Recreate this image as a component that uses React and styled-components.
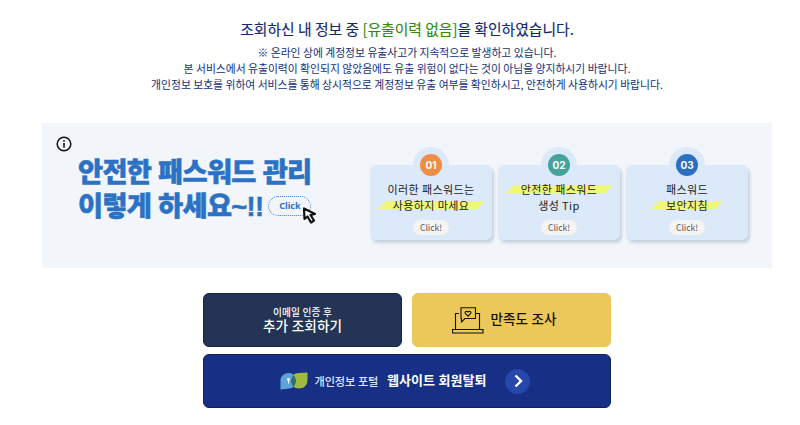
import React from 'react';
import styled, { createGlobalStyle } from 'styled-components';

const Global = createGlobalStyle`
  html, body { margin: 0; padding: 0; background: #fff; }
  body { font-family: "Noto Sans CJK KR", "Noto Sans", sans-serif; }
  * { box-sizing: border-box; }
`;

const Page = styled.div`
  width: 800px;
  height: 425px;
  overflow: hidden;
  padding: 19px 0 0 14px;
  display: flex;
  flex-direction: column;
  align-items: center;
`;

const Title = styled.h2`
  margin: 0;
  font-size: 14.8px;
  line-height: 20px;
  font-weight: 400;
  color: #0f2a6e;
  -webkit-text-stroke: 0.15px #0f2a6e;
  text-align: center;
  white-space: nowrap;
  span { color: #2f8a12; -webkit-text-stroke: 0.15px #2f8a12; }
`;

const Notice = styled.p`
  margin: 5px 0 0;
  font-size: 10.8px;
  line-height: 16px;
  color: #12307a;
  text-align: center;
  white-space: nowrap;
`;

const Banner = styled.section`
  position: relative;
  margin-top: 31px;
  width: 730px;
  height: 145px;
  background: #f2f6fb;
  display: flex;
`;

const InfoIcon = styled.svg`
  position: absolute;
  left: 14px;
  top: 13px;
`;

const Lead = styled.div`
  width: 328px;
  padding: 33px 0 0 36px;
`;

const Headline = styled.h3`
  margin: 0;
  font-family: "Liberation Sans", "Noto Sans CJK KR", sans-serif;
  font-size: 27.3px;
  line-height: 34px;
  font-weight: 900;
  color: #2c72c4;
  -webkit-text-stroke: 0.5px #2c72c4;
  letter-spacing: -0.7px;
  white-space: nowrap;
  display: flex;
  flex-direction: column;
`;

const HeadRow = styled.span`
  display: flex;
  align-items: center;
`;

const ClickTag = styled.span`
  position: relative;
  margin-left: 5px;
  margin-top: -2px;
  width: 43px;
  height: 20px;
  border: 1.4px dotted #3b78c8;
  border-radius: 10px;
  font-family: "Noto Sans", sans-serif;
  font-size: 9px;
  line-height: 17px;
  font-weight: 700;
  letter-spacing: 0;
  text-align: center;
  color: #2c72c4;
  -webkit-text-stroke: 0;
`;

const Cursor = styled.svg`
  position: absolute;
  right: -8px;
  top: 10px;
`;

const Cards = styled.div`
  display: flex;
  gap: 6px;
  padding-top: 24px;
`;

const Card = styled.div`
  position: relative;
  width: 122px;
  height: 75px;
  margin-top: 18px;
  background: #dce9f9;
  border-radius: 6px;
  box-shadow: 2px 3px 3px rgba(120, 140, 170, 0.35);
  display: flex;
  flex-direction: column;
  align-items: center;
  padding-top: 16px;
`;

const Tab = styled.div`
  position: absolute;
  top: -18px;
  left: 43px;
  width: 36px;
  height: 36px;
  border-radius: 50%;
  background: #dce9f9;
  display: flex;
  align-items: center;
  justify-content: center;
`;

const Badge = styled.span`
  width: 22px;
  height: 22px;
  border-radius: 50%;
  background: ${(p) => p.$color};
  color: #fff;
  font-family: Inter, sans-serif;
  font-size: 10px;
  font-weight: 700;
  line-height: 22px;
  text-align: center;
`;

const CardLine = styled.span`
  position: relative;
  height: 16px;
  font-size: 11px;
  line-height: 16px;
  color: #222;
  white-space: nowrap;
  letter-spacing: 0.4px;
  z-index: 0;
  ${(p) => p.$marked && `
    &::before {
      content: '';
      position: absolute;
      z-index: -1;
      left: -11px;
      right: -11px;
      top: 4px;
      height: 8px;
      background: #eff77a;
      transform: skewX(-45deg);
    }
  `}
`;

const ClickPill = styled.span`
  position: absolute;
  bottom: 5px;
  left: 43px;
  width: 36px;
  height: 15px;
  border-radius: 8px;
  background: #f4f4f4;
  color: #555;
  font-size: 8.5px;
  line-height: 15px;
  text-align: center;
`;

const Actions = styled.div`
  margin-top: 25px;
  width: 408px;
  display: grid;
  grid-template-columns: 199px 199px;
  grid-auto-rows: 54px;
  gap: 7px 10px;
`;

const Action = styled.button`
  border: 1px solid ${(p) => p.$border};
  border-radius: 6px;
  background: ${(p) => p.$bg};
  color: ${(p) => p.$fg};
  font-family: "Liberation Sans", "Noto Sans CJK KR", sans-serif;
  padding: 0 ${(p) => p.$nudge || 0}px 0 0;
  display: flex;
  align-items: center;
  justify-content: center;
  ${(p) => p.$full && 'grid-column: 1 / 3;'}
`;

const Stack = styled.span`
  display: flex;
  flex-direction: column;
  align-items: center;
`;

const Small = styled.span`
  font-size: 9.7px;
  line-height: 13px;
  font-weight: 500;
`;

const Big = styled.span`
  font-size: ${(p) => p.$size || 13.6}px;
  line-height: 16px;
  font-weight: ${(p) => p.$weight || 500};
  margin-left: ${(p) => p.$gap || 0}px;
`;

const PortalName = styled.span`
  font-size: 11.2px;
  font-weight: 500;
  color: #dfe6f5;
  margin-left: 7px;
  letter-spacing: -0.2px;
`;

const Arrow = styled.span`
  width: 25px;
  height: 25px;
  margin-left: 19px;
  border-radius: 50%;
  background: #2648aa;
  display: flex;
  align-items: center;
  justify-content: center;
`;

const cards = [
  { no: '01', color: '#f08d45', lines: [['이러한 패스워드는'], ['사용하지 마세요', true]] },
  { no: '02', color: '#45a39b', lines: [['안전한 패스워드', true], ['생성 Tip']] },
  { no: '03', color: '#2c6ec0', lines: [['패스워드'], ['보안지침', true]] },
];

export default function App() {
  return (
    <Page>
      <Global />
      <Title>조회하신 내 정보 중 <span>[유출이력 없음]</span>을 확인하였습니다.</Title>
      <Notice>
        ※ 온라인 상에 계정정보 유출사고가 지속적으로 발생하고 있습니다.<br />
        본 서비스에서 유출이력이 확인되지 않았음에도 유출 위험이 없다는 것이 아님을 양지하시기 바랍니다.<br />
        개인정보 보호를 위하여 서비스를 통해 상시적으로 계정정보 유출 여부를 확인하시고, 안전하게 사용하시기 바랍니다.
      </Notice>
      <Banner>
        <InfoIcon width="16" height="16" viewBox="0 0 16 16" fill="none">
          <circle cx="8" cy="8" r="6.8" stroke="#111" strokeWidth="1.5" />
          <rect x="7.2" y="7" width="1.6" height="4.6" fill="#111" />
          <rect x="7.2" y="4.2" width="1.6" height="1.6" fill="#111" />
        </InfoIcon>
        <Lead>
          <Headline>
            <HeadRow>안전한 패스워드 관리</HeadRow>
            <HeadRow>
              이렇게 하세요~!!
              <ClickTag>
                Click
                <Cursor width="16" height="17" viewBox="0 0 16 17">
                  <path d="M2 1.500 L2.500 12 L5.500 9.500 L9 15.500 L12 13.500 L8.500 8 L13 7 Z" fill="#fff" stroke="#111" strokeWidth="2.200" strokeLinejoin="round" />
                </Cursor>
              </ClickTag>
            </HeadRow>
          </Headline>
        </Lead>
        <Cards>
          {cards.map((c) => (
            <Card key={c.no}>
              <Tab><Badge $color={c.color}>{c.no}</Badge></Tab>
              {c.lines.map(([text, marked]) => (
                <CardLine key={text} $marked={marked}>{text}</CardLine>
              ))}
              <ClickPill>Click!</ClickPill>
            </Card>
          ))}
        </Cards>
      </Banner>
      <Actions>
        <Action $bg="#233455" $border="#14233f" $fg="#fff">
          <Stack>
            <Small>이메일 인증 후</Small>
            <Big>추가 조회하기</Big>
          </Stack>
        </Action>
        <Action $bg="#ecc75a" $border="#ecc75a" $fg="#111" $nudge={15}>
          <svg width="32" height="27" viewBox="0 0 32 27" fill="none" stroke="#111" strokeWidth="1.1">
            <path d="M7 6.500 H3.500 V22.500 M27.500 22.500 V6.500 H24" />
            <path d="M0.500 22.500 H31 V26 H0.500 Z" />
            <path d="M9 0.800 H23.500 V11.500 H13 L9.500 15 V11.500 H9 Z" />
            <path d="M16 9.200 L13.300 6.400 C12.200 4.800 14.800 3.300 16 5 C17.200 3.300 19.800 4.800 18.700 6.400 Z" />
          </svg>
          <Big $gap={7} $size={13.5}>만족도 조사</Big>
        </Action>
        <Action $full $bg="#173086" $border="#0e2168" $fg="#fff" $nudge={4}>
          <svg width="28" height="18" viewBox="0 0 28 18">
            <path d="M9 1 C4 1 0.500 4 0.500 9 V17.500 L9 16.500 C13 16.500 16 13 16 9 C16 4.500 13 1 9 1 Z" fill="#5da4d6" />
            <path d="M19 1 C14 1 11 4.500 11 9 C11 13 14 16.500 19 16.500 C24 16.500 27.500 13 27.500 8 V0.500 Z" fill="#9fbb3f" />
            <path d="M13.500 3 C15 5 16 7 16 9 C16 11 15 13 13.500 15 C12 13 11 11 11 9 C11 7 12 5 13.500 3 Z" fill="#2f6d78" />
            <circle cx="8.500" cy="7.500" r="1.400" fill="#fff" />
            <rect x="8" y="7.500" width="1" height="4" fill="#fff" />
          </svg>
          <PortalName>개인정보 포털</PortalName>
          <Big $gap={9} $size={13} $weight={700}>웹사이트 회원탈퇴</Big>
          <Arrow>
            <svg width="12" height="14" viewBox="0 0 12 14" fill="none" stroke="#fff" strokeWidth="2.4">
              <path d="M3.500 1.500 L9 7 L3.500 12.500" />
            </svg>
          </Arrow>
        </Action>
      </Actions>
    </Page>
  );
}
